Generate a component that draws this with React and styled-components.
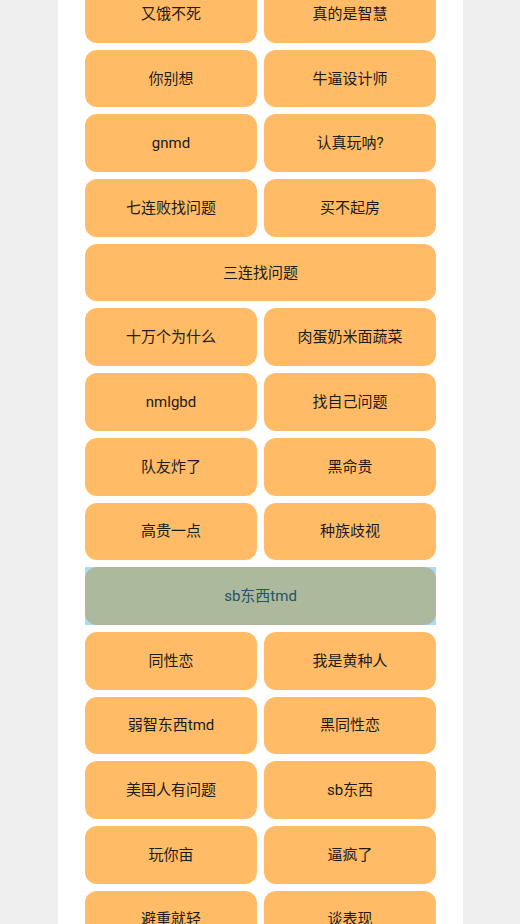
import React from 'react';
import styled, { createGlobalStyle } from 'styled-components';

const items = [
  { label: '又饿不死' },
  { label: '真的是智慧' },
  { label: '你别想' },
  { label: '牛逼设计师' },
  { label: 'gnmd' },
  { label: '认真玩呐?' },
  { label: '七连败找问题' },
  { label: '买不起房' },
  { label: '三连找问题', wide: true },
  { label: '十万个为什么' },
  { label: '肉蛋奶米面蔬菜' },
  { label: 'nmlgbd' },
  { label: '找自己问题' },
  { label: '队友炸了' },
  { label: '黑命贵' },
  { label: '高贵一点' },
  { label: '种族歧视' },
  { label: 'sb东西tmd', wide: true, active: true },
  { label: '同性恋' },
  { label: '我是黄种人' },
  { label: '弱智东西tmd' },
  { label: '黑同性恋' },
  { label: '美国人有问题' },
  { label: 'sb东西' },
  { label: '玩你亩' },
  { label: '逼疯了' },
  { label: '避重就轻' },
  { label: '谈表现' },
];

const GlobalStyle = createGlobalStyle`
  html, body {
    margin: 0;
    padding: 0;
    background: #efefef;
    overflow: hidden;
  }
  body {
    font-family: Roboto, "Noto Sans CJK SC", sans-serif;
  }
`;

const App = () => {
  return (
    <>
      <GlobalStyle />
      <Page>
        <Column>
          <PhraseGrid>
            {items.map((item) => (
              <PhraseButton key={item.label} $wide={item.wide} $active={item.active}>
                {item.label}
              </PhraseButton>
            ))}
          </PhraseGrid>
        </Column>
      </Page>
    </>
  );
};

const Page = styled.div`
  height: 924px;
  overflow: hidden;
  display: flex;
  justify-content: center;
`;

const Column = styled.div`
  width: 405px;
  margin-left: 1px;
  background: #fff;
  padding: 0 27px;
  box-sizing: border-box;
  overflow: hidden;
`;

const PhraseGrid = styled.div`
  display: grid;
  grid-template-columns: 1fr 1fr;
  grid-auto-rows: 57.7px;
  gap: 7px;
  margin-top: -15px;
`;

// the selected phrase sits on a light-blue highlight with square corners
const PhraseButton = styled.div`
  grid-column: ${({ $wide }) => ($wide ? '1 / 3' : 'auto')};
  display: flex;
  align-items: center;
  justify-content: center;
  padding-bottom: 0;
  box-sizing: border-box;
  border-radius: ${({ $active }) => ($active ? '0' : '12px')};
  background: ${({ $active }) => ($active ? '#a9dcf1' : '#ffbb66')};
  color: ${({ $active }) => ($active ? '#245466' : '#1c1c1c')};
  font-size: 15px;
  line-height: 18px;
  position: relative;
  z-index: 0;

  &::after {
    content: '';
    display: ${({ $active }) => ($active ? 'block' : 'none')};
    position: absolute;
    inset: 0;
    background: #acb99c;
    border-radius: 12px;
    z-index: -1;
  }
`;

export default App;
